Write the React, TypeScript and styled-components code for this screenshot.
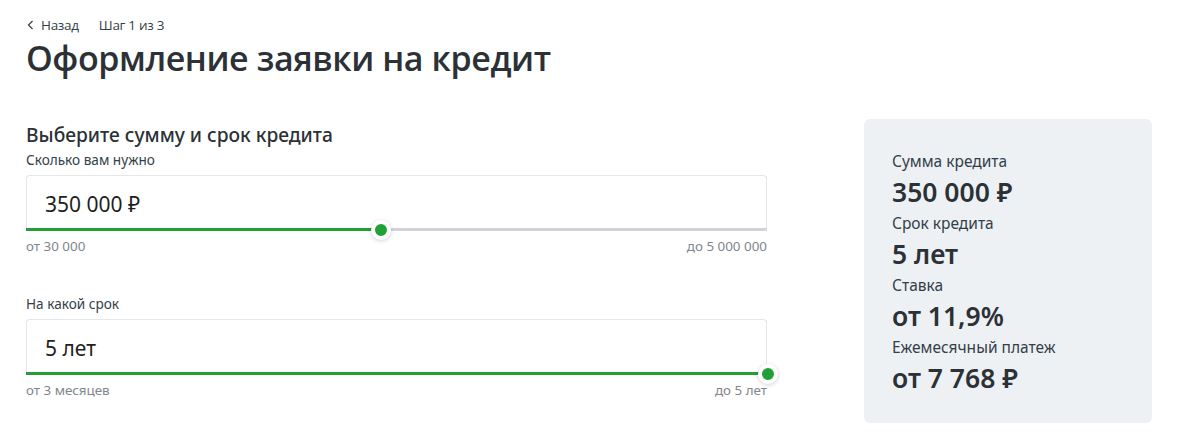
import React from "react";
import styled, { createGlobalStyle } from "styled-components";

const GlobalStyle = createGlobalStyle`
  html, body {
    margin: 0;
    padding: 0;
    background: #ffffff;
  }
  body {
    font-family: "Noto Sans", "Open Sans", sans-serif;
    color: #1f1f22;
  }
`;

const Page = styled.div`
  padding: 16px 48px 0 26px;
  width: 1200px;
  box-sizing: border-box;
`;

const Breadcrumbs = styled.div`
  display: flex;
  align-items: center;
  height: 18px;
  font-family: "Open Sans", sans-serif;
  font-size: 13.5px;
  color: #333f48;
  letter-spacing: -0.3px;
`;

const BackLink = styled.a`
  display: flex;
  align-items: center;
  gap: 7px;
  color: inherit;
  text-decoration: none;
  margin-right: 20px;
  svg {
    margin-left: 1px;
  }
`;

const Title = styled.h1`
  margin: 4px 0 0;
  font-family: "Open Sans", sans-serif;
  font-weight: 600;
  font-size: 34px;
  line-height: 40px;
  letter-spacing: -0.42px;
  color: #2b3136;
`;

const Row = styled.div`
  display: flex;
  align-items: flex-start;
  gap: 97px;
  margin-top: 41px;
`;

const Form = styled.div`
  width: 741px;
  padding-top: 4px;
`;

const Subtitle = styled.h2`
  margin: 0;
  font-family: "Noto Sans", sans-serif;
  font-weight: 500;
  font-size: 19.2px;
  line-height: 24px;
  color: #2b3136;
`;

interface IField {
  spaced?: boolean;
}
const Field = styled.div<IField>`
  margin-top: ${(p) => (p.spaced ? "41px" : "4px")};
`;

const Label = styled.div`
  font-size: 13.6px;
  line-height: 18px;
  color: #333f48;
`;

const InputBox = styled.div`
  position: relative;
  margin-top: 6px;
  height: 56px;
  box-sizing: border-box;
  border: 1px solid #e4e6e9;
  border-bottom: none;
  border-radius: 4px 4px 0 0;
  padding: 0 0 0 18px;
  display: flex;
  align-items: center;
  font-size: 21px;
  color: #1f1f22;
`;

const Track = styled.div`
  position: absolute;
  left: -1px;
  right: -1px;
  bottom: 0;
  height: 3px;
  background: #d0d4d9;
  border-radius: 0 0 2px 2px;
`;

const TrackFill = styled.div`
  position: absolute;
  left: 0;
  top: 0;
  bottom: 0;
  background: #21a038;
`;

const Thumb = styled.div`
  position: absolute;
  top: 50%;
  width: 12px;
  height: 12px;
  margin: -10px 0 0 -9px;
  border-radius: 50%;
  background: #21a038;
  border: 4px solid #ffffff;
  box-shadow: 0 1px 4px rgba(0, 0, 0, 0.18);
`;

const Hints = styled.div`
  display: flex;
  justify-content: space-between;
  margin-top: 7px;
  font-size: 13.4px;
  line-height: 16px;
  color: #80868d;
`;

const Summary = styled.aside`
  width: 288px;
  height: 304px;
  box-sizing: border-box;
  padding: 32px 28px;
  background: #eef1f4;
  border-radius: 6px;
`;

const SummaryLabel = styled.div`
  font-size: 15.5px;
  line-height: 20px;
  color: #333f48;
`;

const SummaryValue = styled.div`
  font-size: 26.5px;
  font-weight: 600;
  line-height: 42px;
  color: #2b3136;
`;

interface ISlider {
  value: string;
  percent: number;
  from: string;
  to: string;
}

function SliderField({ value, percent, from, to }: ISlider) {
  return (
    <>
      <InputBox>
        {value}
        <Track>
          <TrackFill style={{ width: `${percent}%` }} />
          <Thumb style={{ left: `${percent}%` }} />
        </Track>
      </InputBox>
      <Hints>
        <span>{from}</span>
        <span>{to}</span>
      </Hints>
    </>
  );
}

const summary = [
  ["Сумма кредита", "350 000 ₽"],
  ["Срок кредита", "5 лет"],
  ["Ставка", "от 11,9%"],
  ["Ежемесячный платеж", "от 7 768 ₽"],
];

export default function App() {
  return (
    <Page>
      <GlobalStyle />
      <Breadcrumbs>
        <BackLink href="#">
          <svg width="7" height="10" viewBox="0 0 7 10" fill="none">
            <path d="M5.5 1L1.5 5l4 4" stroke="#333f48" strokeWidth="1.2" />
          </svg>
          Назад
        </BackLink>
        <span>Шаг 1 из 3</span>
      </Breadcrumbs>
      <Title>Оформление заявки на кредит</Title>
      <Row>
        <Form>
          <Subtitle>Выберите сумму и срок кредита</Subtitle>
          <Field>
            <Label>Сколько вам нужно</Label>
            <SliderField value="350 000 ₽" percent={47.8} from="от 30 000" to="до 5 000 000" />
          </Field>
          <Field spaced>
            <Label>На какой срок</Label>
            <SliderField value="5 лет" percent={100} from="от 3 месяцев" to="до 5 лет" />
          </Field>
        </Form>
        <Summary>
          {summary.map(([label, value]) => (
            <div key={label}>
              <SummaryLabel>{label}</SummaryLabel>
              <SummaryValue>{value}</SummaryValue>
            </div>
          ))}
        </Summary>
      </Row>
    </Page>
  );
}
